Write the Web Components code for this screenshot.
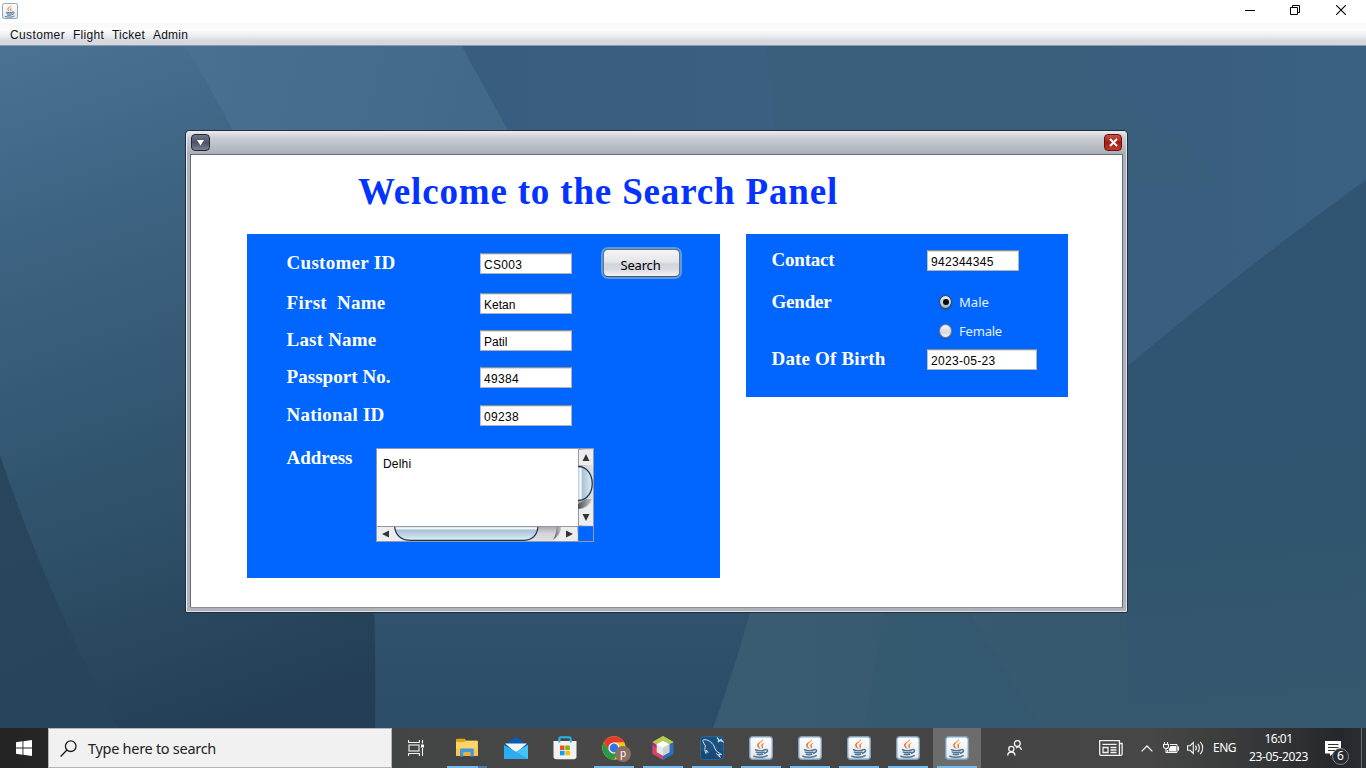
<!DOCTYPE html>
<html lang="en">
<head>
<meta charset="utf-8">
<title>Airline desktop</title>
<style>
html,body{margin:0;height:100%;overflow:hidden;background:#fff}
body{font-family:"Liberation Sans",Arial,sans-serif;font-size:12px;color:#000}
</style>
</head>
<body>
<app-screen></app-screen>
<script>
const define = (name, css, html, setup) => {
  const tpl = document.createElement('template');
  tpl.innerHTML = `<style>*{box-sizing:border-box}${css}</style>${html}`;
  customElements.define(name, class extends HTMLElement {
    constructor() {
      super();
      this.attachShadow({mode: 'open'}).append(tpl.content.cloneNode(true));
    }
    connectedCallback() { if (setup) setup(this, this.shadowRoot); }
  });
};

/* A line of text tracked to fill a given advance width. */
define('fit-text', `
:host{display:inline-block;white-space:pre;line-height:1;flex:none}
span{display:inline-block;white-space:pre}`,
'<span></span>', (el, root) => {
  const s = root.querySelector('span');
  s.textContent = el.getAttribute('text');
  const w = parseFloat(el.getAttribute('w'));
  el.style.width = w + 'px';
  const natural = s.getBoundingClientRect().width;
  if (natural) s.style.letterSpacing = ((w - natural) / s.textContent.length).toFixed(3) + 'px';
});

const ICONS = {
  java: [24, 24, `<defs><linearGradient id="g" x2="0" y2="1"><stop offset="0" stop-color="#fff"/><stop offset="1" stop-color="#e3e6ea"/></linearGradient></defs>
    <rect x=".7" y=".7" width="22.6" height="22.6" rx="3" fill="url(#g)" stroke="#7f9fb9" stroke-width="1.4"/>
    <path d="M13.9 2.800c1 2.600-4.200 4-4.200 6.500 0 1.500 1.300 2.200 2 3.700-2.300-.9-3.900-2.200-3.600-4.200.4-2.500 5.200-3.100 5.800-6z" fill="#e5702a"/>
    <path d="M16.200 6.300c-2.300.9-4.200 1.800-4 3.400.1 1 1.100 1.700.3 3.200 1.500-.8 2-2 1.400-3-.6-1.200.6-2.300 2.300-3.600z" fill="#ea8235"/>
    <path d="M6.500 13.800c2.500 1 7.200 1 9.600 0M7.300 16.100c2.400.8 5.500.8 7.600 0M8.200 18.200c2 .6 4 .5 5.500 0M4.800 20.300c3.700 1.400 10.400 1.300 13.400-.6M16.200 13.600c2.700-.8 3.700 2.200-.6 3.600" fill="none" stroke="#4d7698" stroke-width="1.500" stroke-linecap="round"/>`],
  start: [16, 16, '<path fill="#fff" d="M0 2.300 6.500 1.300V7.600H0zM7.400 1.200 16 0V7.600H7.400zM0 8.500h6.500v6.200L0 13.800zM7.400 8.500H16V16l-8.600-1.200z"/>'],
  search: [17, 17, '<circle cx="10.700" cy="6.200" r="5.300" fill="none" stroke="#1c1c1c" stroke-width="1.300"/><path d="M7 10 .6 16.400" stroke="#1c1c1c" stroke-width="1.400"/>'],
  tasks: [17, 16, '<g fill="none" stroke="#f4f4f4" stroke-width="1.100"><path d="M.6 0v2.500h10.800V0M.6 16v-2.500h10.800V16"/><rect x="1" y="5" width="10" height="6"/><path d="M14.500 0v3.500M14.500 8v8"/></g><rect x="13" y="4.500" width="3" height="3" fill="#fff"/>'],
  folder: [22, 20, `<path d="M0 2.300C0 1 .5.800 1.500.8H9l1 2h10.500c1 0 1.300.4 1.300 1.300V18H0z" fill="#e3a21a"/><path d="M0 4h8.500L10 2.800h11c.6 0 .8.4.8 1V17.500H0z" fill="#fdd66a"/><path d="M0 10h22v7.500H0z" fill="#fbc94f"/><path d="M4 18.500v-6.300c0-1 .5-1.700 1.500-1.700h10.800c1 0 1.500.7 1.500 1.700v6.300h-3.500v-4.300H7.500v4.300z" fill="#4397df"/><path d="M7.500 14.300h6.800v3.500H7.500z" fill="#eab23b"/>`],
  mail: [24, 24, '<path d="M0 9 12 .5 24 9v3H0z" fill="#0a5aad"/><path d="M1 7.500h22L12 17z" fill="#f2f5f8"/><path d="M0 9v14h24V9l-12 6.800z" fill="#2aaef2"/><path d="M24 9 0 23h24z" fill="#41c5f7"/><path d="m12 15.800 12 7.200H0z" fill="#1f93e2" opacity=".5"/>'],
  store: [24, 24, '<path d="M6.300 7V3c0-1 .7-1.700 1.700-1.700h8c1 0 1.700.7 1.700 1.700v4" fill="none" stroke="#28b4ea" stroke-width="2"/><path d="M.5 5h23v15.500c0 1.700-1 2.800-2.800 2.800H3.300C1.500 23.300.5 22.200.5 20.500z" fill="#f1f1f1"/><path d="M6.300 4v2.500M17.700 4v2.500" stroke="#28b4ea" stroke-width="2"/><path fill="#f25022" d="M7 9.500h4.500V14H7z"/><path fill="#7db700" d="M12.300 9.500h4.500V14h-4.500z"/><path fill="#00a1f1" d="M7 14.800h4.500v4.500H7z"/><path fill="#ffb900" d="M12.300 14.800h4.500v4.500h-4.500z"/>'],
  chrome: [24, 24, '<circle cx="12" cy="12" r="11.700" fill="#fbc116"/><path d="M1.870 6.150A11.700 11.700 0 0 1 22.130 6.150H12L6.900 15z" fill="#e33b2e"/><path d="M1.870 6.150A11.700 11.700 0 0 0 12 23.700L17 15H7z" fill="#299a48"/><circle cx="12" cy="12" r="5.600" fill="#fff"/><circle cx="12" cy="12" r="4.400" fill="#2f74e8"/>'],
  netbeans: [22, 24, '<path d="M11 0 21.500 6 11 12 .5 6z" fill="#b4ce52"/><path d="M.5 6 11 0v6L5 9v7L.5 18z" fill="#a8347e"/><path d="M.5 9v9L11 24v-7z" fill="#d24468"/><path d="M21.500 6v12L11 24v-8l5-8z" fill="#2f6fc2"/><path d="M21.500 6 11 0 .5 6 5 9l12-.5z" fill="#b3cd4f"/><path d="m11 5 6.300 3.300v7.900L11 19.800l-6.300-3.600V8.300z" fill="#e3e8e2"/><path d="m11 5 6.300 3.300-6.300 3.400-6.300-3.400z" fill="#fff"/><path d="m17.300 8.300-6.300 3.400v8.100l6.300-3.600z" fill="#cbd3cf"/>'],
  mysql: [24, 24, '<rect x=".5" y=".5" width="23" height="23" rx="3" fill="#1d5180" stroke="#28678f"/><path d="M1 15h22v5c0 2-1 3-3 3H4c-2 0-3-1-3-3z" fill="#174673" opacity=".7"/><path d="M6 17.500C4.500 15 4.600 12 5.500 10 3.800 7.500 2 4.300 3.500 3.800 7 3 12 6 14 10c1 2.200 1.500 4 2.600 5.300l5 3.200-3-.2 1.600 3.200-4.200-4.300M6 17.500l.3-3.500 2 2.800" fill="none" stroke="#d5e0e8" stroke-width="1"/><path d="m17 1.500 2 2.500-1 2 2-1.500 2.500 1-2-2.500" fill="none" stroke="#c5d9e6" stroke-width="1.300"/>'],
  people: [15, 16, '<g fill="none" stroke="#f3f3f3" stroke-width="1.300"><circle cx="10.300" cy="3.500" r="2.900"/><path d="M9 8c2.700-2.300 5-.5 5.400 2"/><circle cx="4.300" cy="9" r="2.600"/><path d="M.7 15.500c.2-4.700 7-4.700 7.300 0"/></g>'],
  news: [24, 16, '<g fill="none" stroke="#f3f3f3" stroke-width="1.300"><path d="M20.500 3.500h2.600V14c0 1-1 1.300-1.500 1.300H2C1 15.300.7 14.500.7 14V.7h19.700V14c0 .8.600 1.300 1.200 1.300"/><path d="M4 7.500h5v5H4zM3.300 4.300h14.300M11.500 7.500h6M11.500 10h6M11.500 12.500h6"/></g>'],
  chevron: [12, 7, '<path d="m.6 6.400 5.400-5.400 5.400 5.400" fill="none" stroke="#f3f3f3" stroke-width="1.300"/>'],
  battery: [16, 12, '<g stroke="#f3f3f3" fill="none"><path d="M1.500 0v2M4.500 0v2M.5 2.500h5v2c0 1-1 2-2.500 2s-2.500-1-2.500-2zM3 6.500v4h2" stroke-width="1.100"/><path d="M7 2.500h7v8H4.500V8"/></g><path d="M7.500 4H13v5.500H5.700V7.500z M14.500 4.500H16v4h-1.500z" fill="#fff"/>'],
  sound: [17, 14, '<g fill="none" stroke="#f3f3f3" stroke-width="1.100"><path d="M.6 4.700h2.500L6.300 1.500v11L3.100 9.300H.6z"/><path d="M8.500 4.700c1 1.200 1 3.300 0 4.600M10.800 2.800c2 2.200 2 6.200 0 8.400M13.200.8c3.300 3.400 3.300 9 0 12.400"/></g>'],
  action: [16, 15, '<path d="M0 0h16v12.500h-8L5 15v-2.500H0z" fill="#fff"/><path d="M3 3.500h10.500M3 6.500h10.500M3 9.500h7" stroke="#333" stroke-width="1"/>'],
  min: [10, 10, '<path d="M0 5.500h10" stroke="#000"/>'],
  restore: [10, 10, '<path d="M2.500 2V.5h7v7H8M.5 2.500h7v7h-7z" fill="none" stroke="#000"/>'],
  close: [10, 10, '<path d="m0 0 10 10M10 0 0 10" stroke="#000" stroke-width="1.100"/>']
};
define('ui-icon', ':host{display:block;flex:none;line-height:0}svg{display:block}', '<span></span>', (el, root) => {
  const [w, h, body] = ICONS[el.getAttribute('name')];
  const size = +(el.getAttribute('size') || w);
  root.querySelector('span').innerHTML =
    `<svg width="${size}" height="${size * h / w}" viewBox="0 0 ${w} ${h}">${body}</svg>`;
});

define('title-bar', `
:host{display:flex;height:23px;background:#fff;align-items:flex-start;padding:3px 20px 0 2px}
.controls{margin-left:auto;display:flex;gap:36px;padding-top:2px}
.controls ui-icon:nth-child(2){margin-left:-1px}`,
`<ui-icon name="java" size="16"></ui-icon>
<div class="controls"><ui-icon name="min"></ui-icon><ui-icon name="restore"></ui-icon><ui-icon name="close"></ui-icon></div>`);

define('menu-bar', `
:host{display:flex;height:23px;padding:1px 10px 0;gap:8px;align-items:center;font-size:12px;color:#111;
background:linear-gradient(#f7f8fa 0,#fdfdfd 30%,#e6e8ed 65%,#d6d8e0 80%,#d6d8e0 94%);border-bottom:1px solid #8f98a8}`,
`<fit-text text="Customer" w="55"></fit-text><fit-text text="Flight" w="31"></fit-text><fit-text text="Ticket" w="33"></fit-text><fit-text text="Admin" w="35"></fit-text>`);

define('desk-wallpaper', ':host{display:block;width:1366px;height:682px}svg{display:block}',
`<svg width="1366" height="682" viewBox="0 46 1366 682">
<defs>
<linearGradient id="a" x1="0" y1="46" x2="230" y2="728" gradientUnits="userSpaceOnUse"><stop offset="0" stop-color="#4a7294"/><stop offset=".25" stop-color="#3e6483"/><stop offset=".7" stop-color="#2e5068"/><stop offset="1" stop-color="#233e55"/></linearGradient>
<linearGradient id="b" x1="187" y1="46" x2="520" y2="140" gradientUnits="userSpaceOnUse"><stop offset="0" stop-color="#497092"/><stop offset="1" stop-color="#416887"/></linearGradient>
<linearGradient id="c" x1="0" y1="455" x2="130" y2="728" gradientUnits="userSpaceOnUse"><stop offset="0" stop-color="#28475f"/><stop offset="1" stop-color="#26445c"/></linearGradient>
<linearGradient id="d" x1="462" y1="0" x2="1366" y2="0" gradientUnits="userSpaceOnUse"><stop offset="0" stop-color="#385d80"/><stop offset=".3" stop-color="#3a5f80"/><stop offset=".65" stop-color="#3a5f7c"/><stop offset=".78" stop-color="#395e80"/><stop offset="1" stop-color="#3a6083"/></linearGradient>
<linearGradient id="e" x1="1200" y1="300" x2="1240" y2="728" gradientUnits="userSpaceOnUse"><stop offset="0" stop-color="#305472"/><stop offset=".5" stop-color="#32556f"/><stop offset="1" stop-color="#35586f"/></linearGradient>
<linearGradient id="f" x1="0" y1="612" x2="0" y2="728" gradientUnits="userSpaceOnUse"><stop offset="0" stop-color="#30526d"/><stop offset="1" stop-color="#2c4d67"/></linearGradient>
<linearGradient id="h" x1="754" y1="0" x2="1127" y2="0" gradientUnits="userSpaceOnUse"><stop offset="0" stop-color="#395c72"/><stop offset="1" stop-color="#35586f"/></linearGradient>
</defs>
<path fill="url(#a)" d="M0 46h1366v682H0z"/>
<path fill="url(#b)" d="M185 46h277q28 50 55 100H241Q215 95 185 46z"/>
<path fill="url(#c)" d="M0 455Q45 590 118 728H0z"/>
<path fill="url(#d)" d="M462 46h904v340H640Q508 130 508 130 482 84 462 46z"/>
<path fill="#3a6079" opacity=".35" d="M766 46h285l160 120v20H780Q772 100 766 46z"/>
<path fill="url(#e)" d="M1366 180Q1240 270 1080 406V728h286z"/>
<path fill="url(#f)" d="M374 600h400v128H375Q376 670 374 600z"/>
<path fill="url(#h)" d="M753 600h374v128H713Q738 660 753 600z"/>
<path fill="#32556e" opacity=".35" d="M886 600h75l80 128H865z"/>
</svg>`);

/* One labelled form line; its control goes in the slot. */
define('form-row', `
:host{display:flex;align-items:flex-start;color:#fff}
.label{width:var(--label,194px);padding-left:.5px;font:bold 19px/1 "Liberation Serif",serif;flex:none}
.label fit-text{display:block}`,
'<div class="label"></div><slot></slot>', (el, root) => {
  const t = document.createElement('fit-text');
  t.setAttribute('text', el.getAttribute('label'));
  t.setAttribute('w', el.getAttribute('w'));
  root.querySelector('.label').append(t);
});

define('text-field', `
:host{display:flex;align-items:center;width:92px;height:21px;background:#fff;color:#000;font-size:12px;padding:2px 0 0 3px;
border:1px solid #b2b3b0;border-top:1px solid #8e8f91;border-left-color:#bdbebf;box-shadow:inset 0 1px #dcdcdc;flex:none}
:host([numeric]){letter-spacing:.3px}`,
'<slot></slot>');

define('push-button', `
:host{display:flex;align-items:center;justify-content:center;width:77px;height:28px;border:1px solid #6d737e;border-bottom-color:#50545d;border-radius:5px;
background:linear-gradient(#f5f5f7,#e5e6ea 45%,#d2d4dc 55%,#d9dbe1 75%,#f2f3f5);box-shadow:0 0 0 2px #5b9bdf;
font:13px "Noto Sans",sans-serif;color:#000;padding:4px 2px 0 0;flex:none}`, '<slot></slot>');

define('radio-option', `
:host{display:flex;align-items:center;height:18px;gap:7px;font:13px "Noto Sans",sans-serif;color:#e6f0ff}
i{width:13px;height:14px;border-radius:50%;border:1px solid #768292;background:linear-gradient(#f7f7f8,#d5d8df 60%,#f3f3f4);box-shadow:0 1px 1px #234c8c;display:grid;place-items:center}
:host([checked]) i{background:linear-gradient(#e8f0f5,#9db6c8);border-color:#34495f}
:host([checked]) i::after{content:"";width:6px;height:6px;border-radius:50%;background:#080a0d}
fit-text{padding-top:2px}`,
'<i></i><slot></slot>');

define('scroll-area', `
:host{display:grid;grid-template:77px 15px/201px 15px;width:218px;height:94px;border:1px solid #939ba6;flex:none;color:#000;font-size:12px}
.text{background:#fff;padding:8px 0 0 6px;letter-spacing:.2px}
svg{display:block}`,
`<div class="text"><slot></slot></div>
<svg width="15" height="77" viewBox="0 0 15 77"><defs><linearGradient id="v"><stop offset="0" stop-color="#b4cbdd"/><stop offset=".2" stop-color="#fff"/><stop offset=".3" stop-color="#a9c2d6"/><stop offset="1" stop-color="#dbecf5"/></linearGradient><linearGradient id="t"><stop offset="0" stop-color="#a4a5a9"/><stop offset=".5" stop-color="#d4d5da"/><stop offset="1" stop-color="#dfe0e4"/></linearGradient><linearGradient id="s"><stop offset="0" stop-color="#4e4f53"/><stop offset="1" stop-color="#c9cad0"/></linearGradient></defs>
<path fill="url(#t)" d="M0 0h15v77H0z"/><path fill="#ededf0" d="M1 1h14v15H1zM15 50v26H1V60Q11 60 15 50z"/><path d="M0 60Q10 59 14 50L8 50 0 55z" fill="url(#s)"/>
<path d="M0 17.500C19 17.500 19 51.500 0 51.500z" fill="url(#v)"/><path d="M0 17.500C19 17.500 19 51.500 0 51.500" fill="none" stroke="#20384f" stroke-width="1.300"/><path d="M.5 0v17M.5 60v17" stroke="#9199a4"/><path d="m8 5 3.500 7h-7zM4.500 65h7L8 72z" fill="#343434"/></svg>
<svg width="201" height="15" viewBox="0 0 201 15"><defs><linearGradient id="h" x2="0" y2="1"><stop offset="0" stop-color="#9eb5c7"/><stop offset=".15" stop-color="#fff"/><stop offset=".3" stop-color="#a9c2d6"/><stop offset="1" stop-color="#dcf0f8"/></linearGradient><linearGradient id="k" x2="0" y2="1"><stop offset="0" stop-color="#a4a5a9"/><stop offset=".5" stop-color="#d4d5da"/><stop offset="1" stop-color="#dfe0e4"/></linearGradient><linearGradient id="s" x2="0" y2="1"><stop offset="0" stop-color="#4e4f53"/><stop offset="1" stop-color="#d0d1d6"/></linearGradient></defs>
<path fill="url(#k)" d="M0 0h201v15H0z"/><path fill="#ededf0" d="M0 1h17q1 9 9 14H0zM200 1v14h-24q8-5 8-14z"/><path d="M184 0q0 8-8 14 3-5 4-14z" fill="url(#s)"/>
<path d="M17.500 0Q19 14.400 34 14.400H146Q160 14.400 161 0z" fill="url(#h)" stroke="#20384f" stroke-width="1.200"/><path d="M0 .5h201" stroke="#9199a4"/><path d="m5 8 7-3.500v7zM189 4.500v7l7-3.500z" fill="#343434"/></svg>
<svg width="15" height="15"><path d="M0 .5h15M.5 0v15" stroke="#3c83e0" opacity=".7"/></svg>`);

define('blue-panel', ':host{display:block;background:#06f;flex:none}', '<slot></slot>');

define('search-panel', `
:host{display:block;height:100%;background:#fff;padding:18px 0 0 56px}
h1{margin:0 0 0 111px;height:61px;font:bold 37px/1 "Liberation Serif",serif;color:#0433ff}
.panels{display:flex;gap:26px;align-items:flex-start}
.main{width:473px;height:344px;padding:19px 0 0 39px}
.side{width:322px;height:163px;padding:16px 0 0 25px;--label:156px}
.main form-row{height:21px}
.main push-button{margin:-4px 0 0 31px}
.radios{display:grid;row-gap:11px;padding:1px 0 0 12px}`,
`<h1><fit-text text="Welcome to the Search Panel" w="480"></fit-text></h1>
<div class="panels">
<blue-panel class="main">
<form-row label="Customer ID" w="109"><text-field numeric>CS003</text-field><push-button><fit-text text="Search" w="40"></fit-text></push-button></form-row>
<form-row label="First  Name" w="99" style="margin-top:19px"><text-field>Ketan</text-field></form-row>
<form-row label="Last Name" w="90" style="margin-top:16px"><text-field>Patil</text-field></form-row>
<form-row label="Passport No." w="104" style="margin-top:16px"><text-field numeric>49384</text-field></form-row>
<form-row label="National ID" w="98" style="margin-top:17px"><text-field numeric>09238</text-field></form-row>
<form-row label="Address" w="66" style="margin-top:22px;--label:90px"><scroll-area>Delhi</scroll-area></form-row>
</blue-panel>
<blue-panel class="side">
<form-row label="Contact" w="63" style="height:21px"><text-field numeric>942344345</text-field></form-row>
<form-row label="Gender" w="60" style="margin-top:21px;height:57px"><div class="radios"><radio-option checked><fit-text text="Male" w="30"></fit-text></radio-option><radio-option><fit-text text="Female" w="43"></fit-text></radio-option></div></form-row>
<form-row label="Date Of Birth" w="114"><text-field numeric style="width:110px">2023-05-23</text-field></form-row>
</blue-panel>
</div>`);

define('inner-window', `
:host{display:flex;flex-direction:column;width:943px;height:483px;border:1px solid #262b38;border-radius:4px 4px 2px 2px;background:#adb2bb;padding:0 4px 4px;box-shadow:inset 1px 1px #eceef1,inset -1px -1px #e0e2e6}
header{height:23px;margin:0 -3px;padding:3px 4px 0 4px;display:flex;justify-content:space-between;background:linear-gradient(#ececf0,#c9ccd4 30%,#bcc0c9 60%,#a9aeb7);border-radius:3px 3px 0 0}
b{width:19px;height:17px;border-radius:4px;display:grid;place-items:center;border:1px solid #22283a}
.menu{background:linear-gradient(#6e7688,#4b5366 50%,#79808f)}
.x{width:18px;background:linear-gradient(#c4564e,#a21c12 50%,#c13a2b);border-color:#6c0f0d}
b svg{display:block}
main{flex:1;border:1px solid #656d7c;border-bottom-color:#8a909c;min-height:0}`,
`<header><b class="menu"><svg width="7" height="6"><path d="M0 0h7L3.500 5.500z" fill="#fff"/></svg></b><b class="x"><svg width="9" height="9"><path d="m1 1 7 7M8 1 1 8" stroke="#fff" stroke-width="2.100"/></svg></b></header>
<main><slot></slot></main>`);

define('desk-area', `
:host{display:grid;height:682px;overflow:hidden}
desk-wallpaper,inner-window{grid-area:1/1}
inner-window{margin:84px 0 0 185px}`,
'<desk-wallpaper></desk-wallpaper><inner-window><search-panel></search-panel></inner-window>');

define('task-button', `
:host{display:flex;flex-direction:column;width:48px;height:40px;margin-right:1px;align-items:center;justify-content:center;position:relative;flex:none}
:host([active]){background:#6c6c6c}
u{position:absolute;left:4px;right:4px;bottom:0;height:2px;background:#76b9ed;display:none}
:host([open]) u,:host([active]) u{display:block}
:host([multi]) u{background:linear-gradient(90deg,#76b9ed 31px,#4c7ca4 31px)}
em{display:none;position:absolute;right:7px;bottom:6px;width:16px;height:16px;border-radius:50%;background:#8d6e63;color:#fff;font:10px/14px "Noto Sans",sans-serif;text-align:center}
:host([badge]) em{display:block}`,
'<slot></slot><em></em><u></u>', (el, root) => { root.querySelector('em').textContent = el.getAttribute('badge') || ''; });

define('task-bar', `
:host{display:flex;height:40px;align-items:center;color:#fff;background:linear-gradient(90deg,#232323 0,#262626 48px,#434444 392px,#474847 600px,#434443 1000px,#464746 1150px,#343536 1270px,#24282c 1340px,#2b3035);font-family:"Noto Sans",sans-serif}
.start{width:48px;display:grid;place-items:center}
.search{width:344px;height:40px;background:#f1f1f1;border:1px solid #b5b5b5;display:flex;align-items:center;gap:11px;padding-left:11px;color:#222;font-size:14.500px}
.view{width:51px;padding-left:16px}
.people{margin-left:25px}
.news{margin-left:77px}
.chev{margin-left:18px}.bat{margin-left:10px}.snd{margin-left:8px}.lang{margin-left:9px;font-size:12px}
.clock{margin-left:12px;width:61px;display:flex;flex-direction:column;align-items:center;gap:6px;font-size:12px}
.note{margin-left:16px;position:relative}
.note b{position:absolute;left:7px;top:7px;width:17px;height:17px;border:1px solid #888;border-radius:50%;background:#292d31;font:12px/14px "Noto Sans",sans-serif;text-align:center}
.peek{margin-left:auto;margin-right:4px;width:1px;height:40px;background:#6a6d70}`,
`<div class="start"><ui-icon name="start"></ui-icon></div>
<div class="search"><ui-icon name="search"></ui-icon><fit-text text="Type here to search" w="128"></fit-text></div>
<div class="view"><ui-icon name="tasks"></ui-icon></div>
<task-button open multi><ui-icon name="folder"></ui-icon></task-button>
<task-button><ui-icon name="mail"></ui-icon></task-button>
<task-button><ui-icon name="store"></ui-icon></task-button>
<task-button open badge="p"><ui-icon name="chrome"></ui-icon></task-button>
<task-button open><ui-icon name="netbeans"></ui-icon></task-button>
<task-button open><ui-icon name="mysql"></ui-icon></task-button>
<task-button open><ui-icon name="java"></ui-icon></task-button>
<task-button open><ui-icon name="java"></ui-icon></task-button>
<task-button open><ui-icon name="java"></ui-icon></task-button>
<task-button open><ui-icon name="java"></ui-icon></task-button>
<task-button active><ui-icon name="java"></ui-icon></task-button>
<ui-icon class="people" name="people"></ui-icon>
<ui-icon class="news" name="news"></ui-icon>
<ui-icon class="chev" name="chevron"></ui-icon>
<ui-icon class="bat" name="battery"></ui-icon>
<ui-icon class="snd" name="sound"></ui-icon>
<fit-text class="lang" text="ENG" w="23"></fit-text>
<div class="clock"><fit-text text="16:01" w="28"></fit-text><fit-text text="23-05-2023" w="59"></fit-text></div>
<div class="note"><ui-icon name="action"></ui-icon><b>6</b></div>
<div class="peek"></div>`);

define('app-screen', ':host{display:flex;flex-direction:column;width:1366px;height:768px;overflow:hidden}',
'<title-bar></title-bar><menu-bar></menu-bar><desk-area></desk-area><task-bar></task-bar>');
</script>
</body>
</html>
